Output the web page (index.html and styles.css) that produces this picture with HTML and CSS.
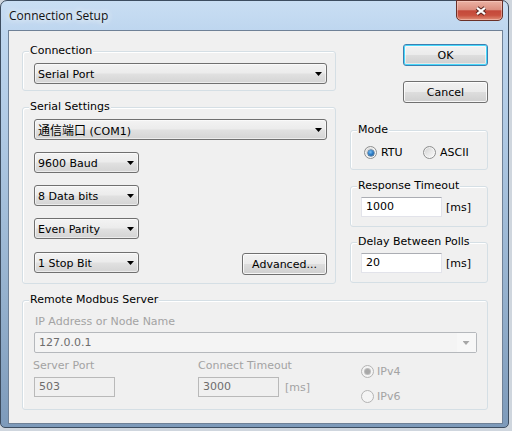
FILE: index.html
```html
<!DOCTYPE html>
<html>
<head>
<meta charset="utf-8">
<title>Connection Setup</title>
<link rel="stylesheet" href="styles.css">
</head>
<body>
<div class="window">
  <div class="titlebar">
    <span class="title">Connection Setup</span>
    <div class="close">
      <svg width="14" height="10" viewBox="0 0 14 10">
        <path d="M3 1.8 L11 8.2 M11 1.8 L3 8.2" stroke="#5a2620" stroke-width="4.2" fill="none"/>
        <path d="M3 1.8 L11 8.2 M11 1.8 L3 8.2" stroke="#ffffff" stroke-width="2.2" fill="none"/>
      </svg>
    </div>
  </div>
  <div class="client">
    <div class="layout">
      <div class="col-left">
        <div class="group g-connection">
          <div class="group-title">Connection</div>
          <div class="group-body">
            <div class="combo wide"><span class="combo-text">Serial Port</span><i class="arrow"></i></div>
          </div>
        </div>
        <div class="group g-serial">
          <div class="group-title">Serial Settings</div>
          <div class="group-body">
            <div class="combo wide"><span class="combo-text"><span class="cjk">通信端口</span> (COM1)</span><i class="arrow"></i></div>
            <div class="combo small"><span class="combo-text">9600 Baud</span><i class="arrow"></i></div>
            <div class="combo small"><span class="combo-text">8 Data bits</span><i class="arrow"></i></div>
            <div class="combo small"><span class="combo-text">Even Parity</span><i class="arrow"></i></div>
            <div class="serial-last">
              <div class="combo small"><span class="combo-text">1 Stop Bit</span><i class="arrow"></i></div>
              <div class="button adv">Advanced...</div>
            </div>
          </div>
        </div>
      </div>
      <div class="col-right">
        <div class="button default ok">OK</div>
        <div class="button cancel">Cancel</div>
        <div class="group g-mode">
          <div class="group-title">Mode</div>
          <div class="group-body mode-radios">
            <div class="radio-item rtu"><span class="radio checked"></span><span>RTU</span></div>
            <div class="radio-item"><span class="radio"></span><span>ASCII</span></div>
          </div>
        </div>
        <div class="group g-timeout">
          <div class="group-title">Response Timeout</div>
          <div class="group-body field-row">
            <div class="input">1000</div><span class="unit">[ms]</span>
          </div>
        </div>
        <div class="group g-delay">
          <div class="group-title">Delay Between Polls</div>
          <div class="group-body field-row">
            <div class="input">20</div><span class="unit">[ms]</span>
          </div>
        </div>
      </div>
      <div class="group g-remote">
        <div class="group-title">Remote Modbus Server</div>
        <div class="group-body">
          <div class="dlabel ip-label">IP Address or Node Name</div>
          <div class="dcombo"><span class="dcombo-text">127.0.0.1</span><span class="dcombo-btn"><i class="arrow darrow"></i></span></div>
          <div class="remote-row">
            <div class="rcol port-col">
              <div class="dlabel port-label">Server Port</div>
              <div class="input disabled">503</div>
            </div>
            <div class="rcol ct-col">
              <div class="dlabel">Connect Timeout</div>
              <div class="field-row">
                <div class="input disabled">3000</div><span class="unit dunit">[ms]</span>
              </div>
            </div>
            <div class="rcol ip-col">
              <div class="radio-item dis"><span class="radio dchecked"></span><span>IPv4</span></div>
              <div class="radio-item dis"><span class="radio ddis"></span><span>IPv6</span></div>
            </div>
          </div>
        </div>
      </div>
    </div>
  </div>
</div>
</body>
</html>
```
FILE: styles.css
```css
html, body {
  margin: 0;
  padding: 0;
}
body {
  width: 512px;
  height: 431px;
  overflow: hidden;
  background: #cfd6de;
  font-family: "DejaVu Sans", sans-serif;
  font-size: 11px;
  color: #000;
}
.cjk {
  font-family: "Noto Sans CJK SC", sans-serif;
  font-size: 12px;
}

/* window frame */
.window {
  box-sizing: border-box;
  width: 509px;
  height: 428px;
  border: 1px solid #3d4d60;
  border-radius: 7px 7px 5px 5px;
  padding: 0 5px 3px 7px;
  background: linear-gradient(180deg, #c9def3 0px, #bed6ef 30px, #aec8e3 140px, #94b0cd 300px, #7d9aba 428px);
  display: flex;
  flex-direction: column;
}
.titlebar {
  height: 29px;
  display: flex;
  justify-content: space-between;
  align-items: flex-start;
}
.title {
  font-family: "Open Sans", sans-serif;
  font-size: 12px;
  line-height: 16px;
  margin: 7px 0 0 1px;
  color: #111;
  text-shadow: 0 0 6px rgba(255,255,255,0.95), 0 0 10px rgba(255,255,255,0.7);
}
.close {
  box-sizing: border-box;
  width: 47px;
  height: 21px;
  margin-top: -1px;
  border: 1px solid #6a3028;
  border-radius: 0 0 5px 5px;
  background: linear-gradient(180deg, #ebb2a4 0%, #dc8f80 45%, #c4493a 52%, #c9513f 75%, #e08f78 100%);
  box-shadow: inset 0 0 0 1px rgba(255,220,210,0.45);
  display: flex;
  align-items: center;
  justify-content: center;
}
.close svg {
  display: block;
  margin-left: 2px;
}

/* client area */
.client {
  box-sizing: border-box;
  height: 394px;
  border: 1px solid #6f8197;
  background: #f0f0f0;
}
.layout {
  display: grid;
  grid-template-columns: 314px 138px;
  column-gap: 14px;
  padding-left: 13px;
}
.col-left, .col-right {
  display: flex;
  flex-direction: column;
}

/* group boxes */
.group {
  box-sizing: border-box;
  border: 1px solid #d5dfe5;
  border-radius: 3px;
  box-shadow: inset 1px 1px 0 #fff;
}
.group-title {
  width: fit-content;
  margin: -8px 0 0 6px;
  padding: 0 1px;
  line-height: 13px;
  background: #f0f0f0;
}
.g-connection {
  margin-top: 20px;
}
.g-connection .group-body {
  padding: 6px 8px 6px 11px;
}
.g-serial {
  margin-top: 16px;
}
.g-serial .group-body {
  padding: 6px 8px 8px 11px;
  display: flex;
  flex-direction: column;
  gap: 12px;
}
.g-serial .serial-last {
  margin-top: 1px;
  display: flex;
  justify-content: space-between;
  align-items: flex-start;
}

/* combo boxes */
.combo {
  box-sizing: border-box;
  height: 21px;
  border: 1px solid #707070;
  border-radius: 3px;
  background: linear-gradient(180deg, #f3f3f3 0%, #ececec 45%, #e0e0e0 55%, #d4d4d4 100%);
  box-shadow: inset 0 0 0 1px rgba(255,255,255,0.55);
  display: flex;
  align-items: center;
  justify-content: space-between;
  padding-left: 3px;
  line-height: 13px;
  white-space: nowrap;
}
.combo-text {
  padding-top: 1px;
}
.combo.wide {
  width: 293px;
}
.combo.small {
  width: 105px;
}
.arrow {
  display: block;
  width: 7px;
  height: 4px;
  margin: 1px 4px 0 0;
  background: #000;
  clip-path: polygon(0 0, 100% 0, 50% 100%);
}

/* buttons */
.button {
  box-sizing: border-box;
  width: 85px;
  height: 22px;
  border: 1px solid #707070;
  border-radius: 3px;
  background: linear-gradient(180deg, #f2f2f2 0%, #ebebeb 48%, #dddddd 52%, #cfcfcf 100%);
  box-shadow: inset 0 0 0 1px rgba(255,255,255,0.8);
  display: flex;
  align-items: center;
  justify-content: center;
  line-height: 13px;
}
.button.default {
  border-color: #3c7fb1;
  box-shadow: inset 0 0 0 1px #48d8fb, inset 0 0 0 2px rgba(255,255,255,0.5);
}
.ok {
  align-self: flex-end;
  margin-top: 13px;
}
.cancel {
  align-self: flex-end;
  margin-top: 15px;
}
.adv {
  margin-top: 1px;
}

/* right column groups */
.g-mode {
  margin-top: 27px;
  height: 40px;
}
.mode-radios {
  padding: 10px 0 0 13px;
  display: flex;
}
.radio-item {
  display: flex;
  align-items: center;
  gap: 4px;
  height: 13px;
  line-height: 13px;
}
.rtu {
  width: 59px;
}
.radio {
  box-sizing: border-box;
  width: 13px;
  height: 13px;
  border-radius: 50%;
  border: 1px solid #8e8f8f;
  background: linear-gradient(135deg, #cfcfcf 0%, #e8e8e8 50%, #fbfbfb 100%);
  box-shadow: inset 0 0 0 1px rgba(255,255,255,0.6);
  display: flex;
  align-items: center;
  justify-content: center;
  flex: none;
}
.radio.checked::after {
  content: "";
  width: 6px;
  height: 6px;
  border-radius: 50%;
  background: radial-gradient(circle at 40% 35%, #7cc1f5 0%, #2f7fc8 45%, #1b4f86 100%);
  box-shadow: 0 0 0 0.5px #1d4a74;
}
.g-timeout {
  margin-top: 16px;
  height: 41px;
}
.g-delay {
  margin-top: 15px;
  height: 41px;
}
.g-timeout .group-body, .g-delay .group-body {
  padding: 5px 0 0 10px;
}
.field-row {
  display: flex;
  align-items: center;
}
.input {
  box-sizing: border-box;
  width: 81px;
  height: 20px;
  border: 1px solid #e2e3ea;
  border-top-color: #abadb3;
  background: #fff;
  padding-left: 4px;
  line-height: 18px;
}
.unit {
  margin-left: 4px;
  line-height: 13px;
}

/* remote server */
.g-remote {
  grid-column: 1 / 3;
  margin-top: 16px;
  height: 110px;
}
.g-remote .group-body {
  padding: 9px 10px 0 11px;
}
.dlabel {
  color: #a3a3a3;
  line-height: 13px;
  white-space: nowrap;
}
.ip-label {
  margin-left: 1px;
}
.port-label {
  margin-left: -1px;
}
.dcombo {
  box-sizing: border-box;
  margin-top: 4px;
  width: 443px;
  height: 21px;
  border: 1px solid #b5b8bc;
  border-radius: 2px;
  background: #f4f4f4;
  display: flex;
  align-items: stretch;
  justify-content: space-between;
}
.dcombo-text {
  padding-left: 4px;
  line-height: 19px;
  color: #6d6d6d;
}
.dcombo-btn {
  width: 19px;
  display: flex;
  align-items: center;
  justify-content: center;
  background: #f7f7f7;
}
.darrow {
  background: #a6a6a6;
  margin: 1px 1px 0 0;
}
.remote-row {
  margin-top: 6px;
  display: flex;
}
.rcol {
  display: flex;
  flex-direction: column;
  gap: 5px;
}
.port-col {
  width: 164px;
}
.ct-col {
  width: 163px;
}
.ip-col {
  padding-top: 6px;
  gap: 12px;
}
.input.disabled {
  background: #f0f0f0;
  border: 1px solid #b9b9b9;
  color: #6d6d6d;
}
.dunit {
  margin-left: 6px;
  color: #a3a3a3;
}
.radio-item.dis {
  gap: 3px;
  color: #a3a3a3;
}
.radio.ddis, .radio.dchecked {
  border-color: #b4b4b4;
  background: #f4f4f4;
  box-shadow: none;
}
.radio.dchecked::after {
  content: "";
  width: 5px;
  height: 5px;
  border-radius: 50%;
  background: #a8a8a8;
  box-shadow: 0 0 0 1px #bdbdbd;
}
```
